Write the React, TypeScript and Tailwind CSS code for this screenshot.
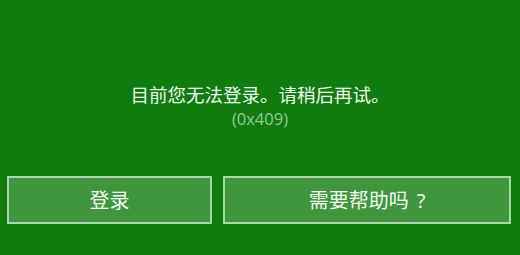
import React from 'react';

const font = { fontFamily: '"Noto Sans CJK SC", "Liberation Sans", sans-serif' };

export default function App() {
  return (
    <div className="w-[520px] h-[255px] bg-[#107c10] flex flex-col" style={font}>
      {/* 提示信息 */}
      <div className="pt-[82px] flex flex-col items-center">
        <div className="text-[18.5px] leading-[24px] text-[#eef7ee]">目前您无法登录。请稍后再试。</div>
        <div className="text-[16.5px] leading-[22px] mt-[2px] text-[#93cc93]" style={{ fontFamily: '"Open Sans", "Noto Sans", sans-serif' }}>
          (0x409)
        </div>
      </div>
      {/* 按钮 */}
      <div className="mt-[46px] flex gap-[11px] pl-[7px]">
        <button className="w-[205px] h-[48px] border-2 border-[#a6d6a6] bg-[#3f963f] text-[20px] text-[#f2faf2]">
          登录
        </button>
        <button className="w-[288px] h-[48px] border-2 border-[#a6d6a6] bg-[#3f963f] text-[20px] text-[#f2faf2]">
          需要帮助吗<span className="ml-[8px]" style={{ fontFamily: '"Open Sans", sans-serif' }}>?</span>
        </button>
      </div>
    </div>
  );
}
